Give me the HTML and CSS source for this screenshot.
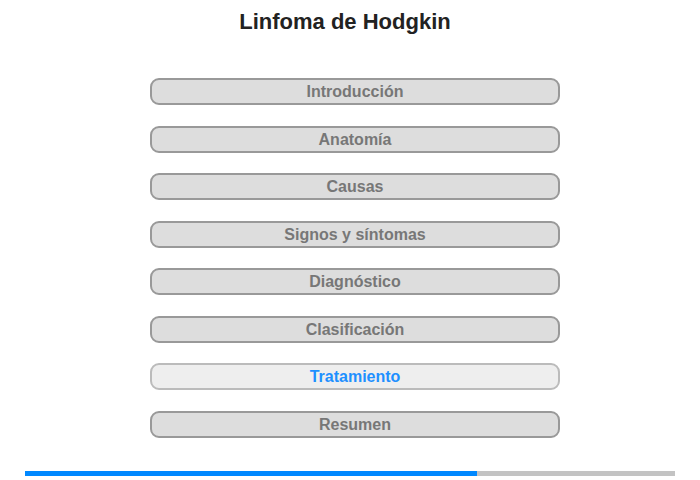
FILE: index.html
```html
<!DOCTYPE html>
<html lang="es">
<head>
  <meta charset="UTF-8">
  <title>Linfoma de Hodgkin</title>
  <link rel="stylesheet" href="styles.css">
</head>
<body>
  <h1>Linfoma de Hodgkin</h1>

  <!-- Section menu -->
  <div class="menu-wrap">
    <div class="menu">
      <div class="menu-item">Introducción</div>
      <div class="menu-item">Anatomía</div>
      <div class="menu-item">Causas</div>
      <div class="menu-item">Signos y síntomas</div>
      <div class="menu-item">Diagnóstico</div>
      <div class="menu-item">Clasificación</div>
      <div class="menu-item active">Tratamiento</div>
      <div class="menu-item">Resumen</div>
    </div>
  </div>

  <!-- Progress bar -->
  <div class="progress">
    <div class="progress-fill" style="width: 69.5%"></div>
  </div>
</body>
</html>
```

FILE: styles.css
```css
body {
  margin: 0;
  padding: 0;
  font-family: 'Liberation Sans', Arial, sans-serif;
  background: #fff;
}

h1 {
  margin: 0;
  padding: 9px 10px 0 0;
  font-size: 22px;
  line-height: 26px;
  text-align: center;
  color: #222;
}

/* Menu */
.menu-wrap {
  padding-left: 10px;
}

.menu {
  width: 410px;
  margin: 43px auto 0;
  display: flex;
  flex-direction: column;
  gap: 20.5px;
}

.menu-item {
  box-sizing: border-box;
  height: 27px;
  line-height: 23px;
  border: 2px solid #999;
  border-radius: 9px;
  background: #ddd;
  color: #777;
  font-size: 16px;
  font-weight: bold;
  text-align: center;
}

.menu-item.active {
  background: #eee;
  border-color: #bbb;
  color: #1e90ff;
}

/* Progress */
.progress {
  margin: 33px 25px 0;
  height: 5px;
  background: #c3c3c3;
}

.progress-fill {
  height: 100%;
  background: #0088ff;
}
```
